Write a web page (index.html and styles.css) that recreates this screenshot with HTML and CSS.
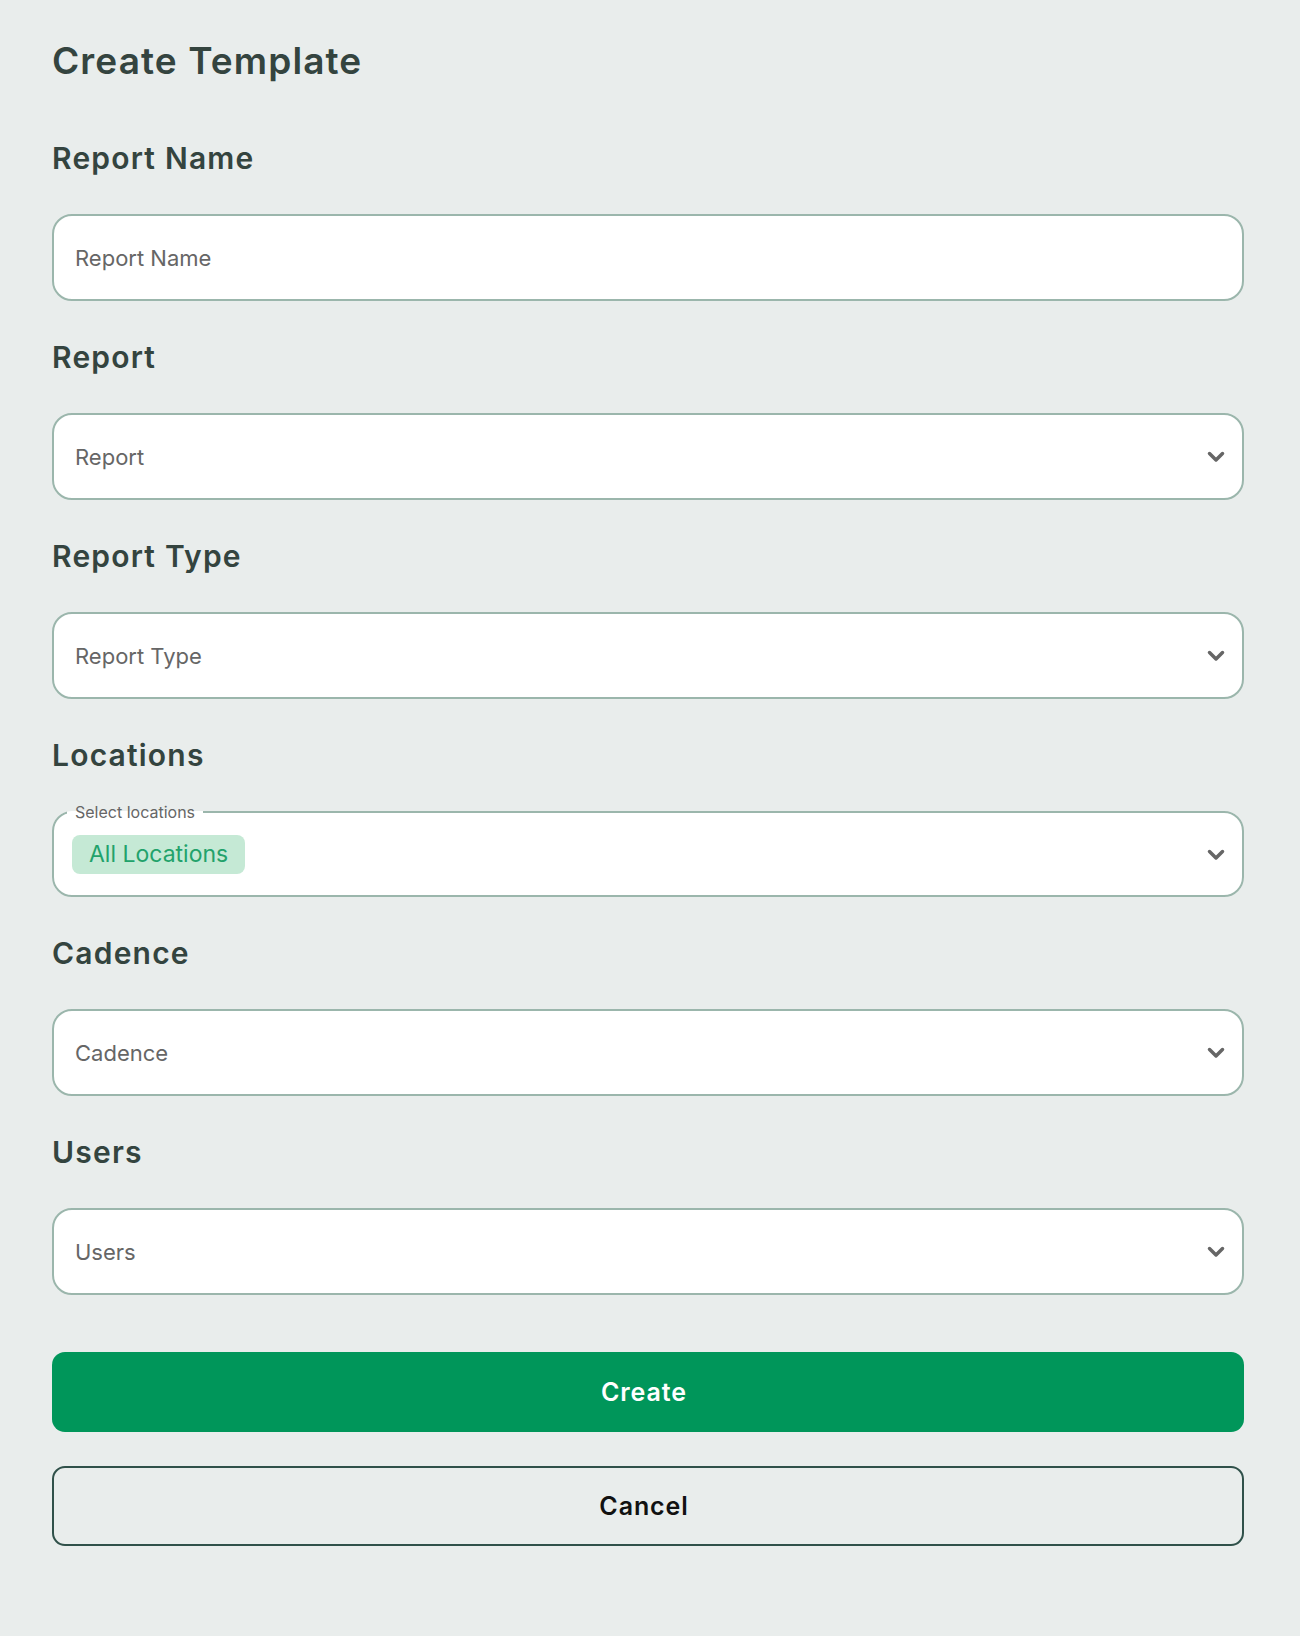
FILE: index.html
```html
<!DOCTYPE html>
<html lang="en">

<head>
    <meta charset="UTF-8">
    <title>Create Template</title>
    <link rel="stylesheet" href="styles.css">
</head>

<body>
    <main class="page">
        <h1 class="title">Create Template</h1>

        <form class="form">
            <div class="field">
                <label class="field-label" for="reportName">Report Name</label>
                <input class="control" id="reportName" type="text" placeholder="Report Name">
            </div>

            <div class="field">
                <label class="field-label">Report</label>
                <div class="control select">
                    <span class="placeholder">Report</span>
                    <svg class="chevron" viewBox="0 0 18 12"><path d="M2.5 2.5 9 9l6.5-6.5" /></svg>
                </div>
            </div>

            <div class="field">
                <label class="field-label">Report Type</label>
                <div class="control select">
                    <span class="placeholder">Report Type</span>
                    <svg class="chevron" viewBox="0 0 18 12"><path d="M2.5 2.5 9 9l6.5-6.5" /></svg>
                </div>
            </div>

            <div class="field">
                <label class="field-label">Locations</label>
                <fieldset class="control multi">
                    <legend>Select locations</legend>
                    <span class="chip">All Locations</span>
                    <svg class="chevron" viewBox="0 0 18 12"><path d="M2.5 2.5 9 9l6.5-6.5" /></svg>
                </fieldset>
            </div>

            <div class="field">
                <label class="field-label">Cadence</label>
                <div class="control select">
                    <span class="placeholder">Cadence</span>
                    <svg class="chevron" viewBox="0 0 18 12"><path d="M2.5 2.5 9 9l6.5-6.5" /></svg>
                </div>
            </div>

            <div class="field">
                <label class="field-label">Users</label>
                <div class="control select">
                    <span class="placeholder">Users</span>
                    <svg class="chevron" viewBox="0 0 18 12"><path d="M2.5 2.5 9 9l6.5-6.5" /></svg>
                </div>
            </div>

            <div class="actions">
                <button class="btn btn-primary" type="button">Create</button>
                <button class="btn btn-secondary" type="button">Cancel</button>
            </div>
        </form>
    </main>
</body>

</html>
```

FILE: styles.css
```css
* {
    margin: 0;
    box-sizing: border-box;
}

body {
    background-color: #e9edec;
    font-family: Inter, "Open Sans", sans-serif;
    color: #34443f;
}

.page {
    padding: 38px 56px 60px 52px;
}

.title {
    font-size: 37px;
    line-height: 45px;
    font-weight: 600;
    letter-spacing: 1.1px;
    margin-bottom: 56px;
}

.form {
    display: flex;
    flex-direction: column;
    gap: 37px;
}

.field {
    display: flex;
    flex-direction: column;
    gap: 37px;
}

.field-label {
    font-size: 30px;
    line-height: 38px;
    font-weight: 600;
    letter-spacing: 1.2px;
}

.control {
    width: 100%;
    height: 87px;
    display: flex;
    align-items: center;
    padding: 0 17px 0 21px;
    border: 2px solid #9bb6ac;
    border-radius: 20px;
    background-color: white;
    font-family: inherit;
    font-size: 22px;
    color: #666;
    outline: none;
}

.control::placeholder {
    color: #666;
}

.placeholder {
    flex-grow: 1;
}

.chevron {
    width: 18px;
    height: 12px;
    flex-shrink: 0;
    margin-left: auto;
}

.chevron path {
    fill: none;
    stroke: #666;
    stroke-width: 3.5;
    stroke-linecap: round;
    stroke-linejoin: round;
}

.multi {
    height: auto;
    margin-top: -8px;
    padding: 14px 17px 21px 18px;
    min-width: 0;
}

.multi legend {
    margin-left: -5px;
    padding: 0 8px;
    font-size: 16px;
    line-height: 18px;
    color: #666;
}

.chip {
    display: inline-block;
    padding: 0 17px;
    height: 39px;
    line-height: 39px;
    border-radius: 8px;
    background-color: #c5e9d5;
    color: #22a26b;
    font-size: 23px;
}

.actions {
    display: flex;
    flex-direction: column;
    gap: 34px;
    margin-top: 20px;
}

.btn {
    width: 100%;
    height: 80px;
    padding: 0 8px 0 0;
    border-radius: 13px;
    font-family: inherit;
    font-size: 25px;
    font-weight: 600;
    letter-spacing: 0.9px;
    cursor: pointer;
}

.btn-primary {
    border: none;
    background-color: #00965a;
    color: white;
}

.btn-secondary {
    border: 2px solid #30514a;
    background-color: transparent;
    color: #111;
}
```
